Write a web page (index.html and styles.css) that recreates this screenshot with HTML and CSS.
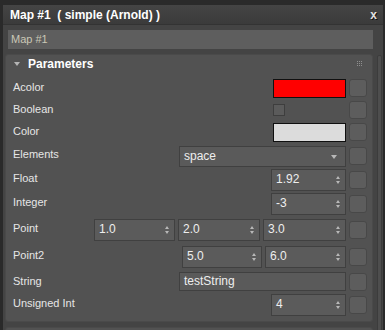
FILE: index.html
```html
<!DOCTYPE html>
<html lang="en">
<head>
  <meta charset="UTF-8" />
  <title>Map #1 ( simple (Arnold) )</title>
  <link rel="stylesheet" href="styles.css">
</head>
<body>

<div class="window">
  <div class="titlebar">
    <span class="title">Map #1&nbsp; ( simple (Arnold) )</span>
    <span class="close">x</span>
  </div>

  <div class="content">
    <div class="main">
      <div class="name-field">Map #1</div>

      <div class="rollout">
        <div class="rollout-head">
          <span class="tri"></span>
          <span class="rollout-title">Parameters</span>
          <span class="grip"></span>
        </div>

        <div class="row r-acolor">
          <span class="label">Acolor</span>
          <div class="swatch red"></div>
          <div class="btn"></div>
        </div>

        <div class="row r-bool">
          <span class="label">Boolean</span>
          <div class="check-cell"><div class="check"></div></div>
          <div class="btn"></div>
        </div>

        <div class="row r-color">
          <span class="label">Color</span>
          <div class="swatch light"></div>
          <div class="btn"></div>
        </div>

        <div class="row r-elem">
          <span class="label">Elements</span>
          <div class="dropdown">space<span class="down"></span></div>
          <div class="btn"></div>
        </div>

        <div class="row r-float">
          <span class="label">Float</span>
          <div class="spin narrow">1.92<span class="arrows"></span></div>
          <div class="btn"></div>
        </div>

        <div class="row r-int">
          <span class="label">Integer</span>
          <div class="spin narrow">-3<span class="arrows"></span></div>
          <div class="btn"></div>
        </div>

        <div class="row r-point">
          <span class="label">Point</span>
          <div class="group g3">
            <div class="spin">1.0<span class="arrows"></span></div>
            <div class="spin">2.0<span class="arrows"></span></div>
            <div class="spin">3.0<span class="arrows"></span></div>
          </div>
          <div class="btn"></div>
        </div>

        <div class="row r-point2">
          <span class="label">Point2</span>
          <div class="group g2">
            <div class="spin">5.0<span class="arrows"></span></div>
            <div class="spin">6.0<span class="arrows"></span></div>
          </div>
          <div class="btn"></div>
        </div>

        <div class="row r-string">
          <span class="label">String</span>
          <div class="textbox">testString</div>
          <div class="btn"></div>
        </div>

        <div class="row r-uint">
          <span class="label">Unsigned Int</span>
          <div class="spin narrow">4<span class="arrows"></span></div>
          <div class="btn"></div>
        </div>
      </div>

      <div class="rollout next"></div>
    </div>

    <div class="scrollbar"></div>
  </div>
</div>

</body>
</html>
```

FILE: styles.css
```css
body {
  margin: 0;
  background: #2a2a2a;
  font-family: 'Liberation Sans', Arial, sans-serif;
  font-size: 11px;
  color: #e6e6e6;
  overflow: hidden;
}

.window {
  margin: 5px 2px 0 3px;
  height: 325px;
  background: #444444;
  overflow: hidden;
}

.titlebar {
  height: 19px;
  display: flex;
  align-items: center;
  justify-content: space-between;
  padding: 0 6px 0 7px;
  background: linear-gradient(#444444, #3b3b3b);
  border-bottom: 1px solid #333333;
}

.title {
  font-weight: bold;
  font-size: 12px;
  color: #ffffff;
}

.close {
  font-weight: bold;
  font-size: 12px;
  color: #e0e0e0;
  text-shadow: 1px 1px 0 #111;
}

.content {
  display: flex;
}

.main {
  flex: 1;
  padding: 0 4px 0 2px;
}

.name-field {
  margin: 5px 0 0 3px;
  height: 19px;
  line-height: 19px;
  padding-left: 3px;
  background: #5e5e5e;
  color: #cac7b6;
  font-size: 11px;
}

.rollout {
  margin-top: 5px;
  background: #525252;
  border: 1px solid #4a4a4a;
  border-radius: 3px;
  padding: 0 5px 5px 7px;
}

.rollout.next {
  height: 10px;
  padding: 0;
}

.rollout-head {
  height: 17px;
  display: flex;
  align-items: center;
}

.tri {
  width: 0;
  height: 0;
  border-left: 3px solid transparent;
  border-right: 3px solid transparent;
  border-top: 4px solid #b5b5b5;
  margin: 0 8px 0 1px;
}

.rollout-title {
  font-weight: bold;
  font-size: 12px;
  color: #ffffff;
  flex: 1;
}

.grip {
  width: 1px;
  height: 1px;
  margin: 0 9px 5px 0;
  background: #8e8e8e;
  box-shadow:
    2px 0 #8e8e8e, 4px 0 #8e8e8e,
    0 2px #8e8e8e, 2px 2px #8e8e8e, 4px 2px #8e8e8e,
    0 4px #8e8e8e, 2px 4px #8e8e8e, 4px 4px #8e8e8e;
}

.row {
  display: flex;
  align-items: center;
  gap: 3px;
}

.label {
  flex: 1;
  align-self: flex-start;
  line-height: 18px;
  white-space: nowrap;
}

.r-acolor { height: 20px; margin-top: 6px; }
.r-bool { height: 19px; margin-top: 2px; }
.r-color { height: 20px; margin-top: 3px; }
.r-elem { height: 22px; margin-top: 3px; }
.r-float { height: 22px; margin-top: 2px; }
.r-int { height: 22px; margin-top: 2px; }
.r-point { height: 22px; margin-top: 4px; }
.r-point2 { height: 22px; margin-top: 5px; }
.r-string { height: 19px; margin-top: 4px; }
.r-uint { height: 22px; margin-top: 3px; }

.btn {
  width: 16px;
  height: 16px;
  background: #5d5d5d;
  border: 1px solid #484848;
  border-radius: 3px;
}

.swatch {
  width: 71px;
  height: 17px;
  border: 1px solid #101010;
}

.swatch.red { background: #ff0000; }
.swatch.light { background: #dcdcdc; }

.check-cell {
  width: 73px;
}

.check {
  width: 10px;
  height: 10px;
  background: #5b5b5b;
  border: 1px solid #3e3e3e;
}

.dropdown,
.textbox,
.spin {
  position: relative;
  box-sizing: border-box;
  background: #5b5b5b;
  border: 1px solid #404040;
  padding-left: 4px;
  line-height: 19px;
  color: #eeeeee;
  font-size: 12px;
}

.dropdown {
  width: 167px;
  height: 21px;
  background: #5a5a5a;
}

.textbox {
  width: 167px;
  height: 19px;
  line-height: 17px;
  background: #5a5a5a;
}

.spin {
  width: 75px;
  height: 22px;
}

.down {
  position: absolute;
  right: 8px;
  top: 8px;
  border-left: 3.5px solid transparent;
  border-right: 3.5px solid transparent;
  border-top: 4px solid #b8b8b8;
}

.arrows {
  position: absolute;
  right: 4px;
  top: 6px;
  width: 5px;
  height: 8px;
}

.arrows::before,
.arrows::after {
  content: "";
  position: absolute;
  left: 0;
  border-left: 2.5px solid transparent;
  border-right: 2.5px solid transparent;
}

.arrows::before {
  top: 0;
  border-bottom: 3px solid #b8b8b8;
}

.arrows::after {
  bottom: 0;
  border-top: 3px solid #b8b8b8;
}

.group {
  display: flex;
  gap: 3px;
}

.g3 .spin:nth-child(1) { width: 81px; }
.g3 .spin:nth-child(2) { width: 82px; }
.g3 .spin:nth-child(3) { width: 83px; }

.g2 .spin:nth-child(1) { width: 80px; }
.g2 .spin:nth-child(2) { width: 81px; }

.scrollbar {
  width: 3px;
  margin: 30px 1px 0 0;
  height: 300px;
  background: #4e4e4e;
  border: 1px solid #3c3c3c;
  border-radius: 2px;
}
```
